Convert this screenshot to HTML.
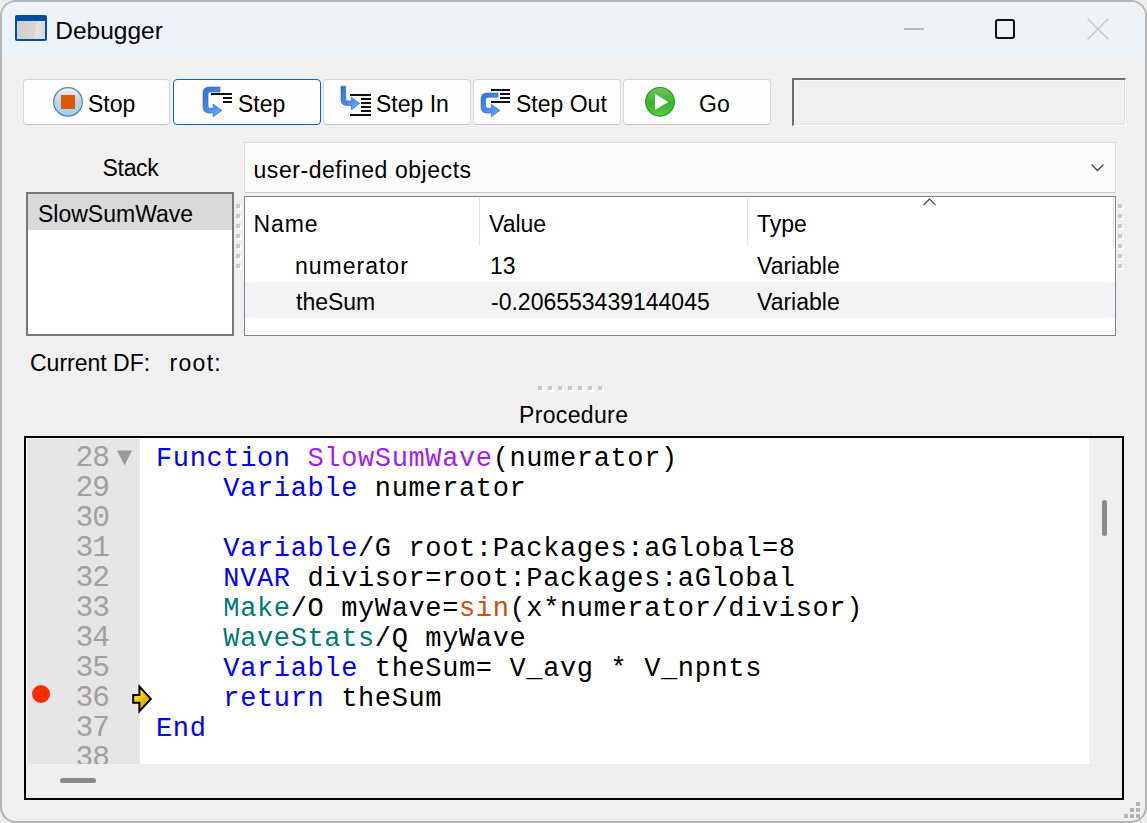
<!DOCTYPE html>
<html><head><meta charset="utf-8">
<style>
html,body{margin:0;padding:0;width:1147px;height:823px;overflow:hidden;background:#eeeeee;position:relative;}
*{box-sizing:border-box;}
.abs{position:absolute;}
.win{position:absolute;left:0;top:0;width:1147px;height:823px;border:2px solid #b5b5b5;border-radius:16px;background:#f0f0f0;overflow:hidden;}
.title{position:absolute;left:0;top:0;width:1143px;height:56px;background:#eef3fa;}
.t{position:absolute;white-space:nowrap;font-family:"Liberation Sans",sans-serif;font-size:23px;line-height:23px;color:#000;}
.m{position:absolute;white-space:nowrap;font-family:"Liberation Mono",monospace;font-size:27px;line-height:27px;letter-spacing:0.63px;color:#000;}
.ln{margin-top:-1px;right:1038px;color:#a0a0a0;font-size:29.5px;letter-spacing:-1px;}
.btn{position:absolute;top:79px;height:46px;background:#fdfdfd;border:1px solid #d5d5d5;border-bottom-color:#c4c4c4;border-radius:4px;}
.dg{position:absolute;width:4px;height:4px;background:#fff;}
.dw{position:absolute;width:4px;height:4px;background:#cacaca;}
</style></head><body>
<div class="win"><div class="title"></div></div>
<!-- title icon -->
<div class="abs" style="left:15px;top:15px;width:32px;height:26px;background:#00509e;border-radius:2px;"></div>
<div class="abs" style="left:17px;top:21px;width:28px;height:18px;background:linear-gradient(100deg,#cfcfcf 0%,#d6d6d6 60%,#e4e4e4 70%,#d2d2d2 100%);"></div>
<div class="t" style="left:55.3px;top:19px;font-size:24.5px;">Debugger</div>
<!-- min/max/close -->
<div class="abs" style="left:904px;top:28px;width:20px;height:2px;background:#b8bbbe;"></div>
<div class="abs" style="left:995px;top:19px;width:20px;height:20px;border:2px solid #111;border-radius:3px;"></div>
<svg class="abs" style="left:1086px;top:17px;" width="24" height="24" viewBox="0 0 24 24"><path d="M2 2L22 22M22 2L2 22" stroke="#c2c6ca" stroke-width="1.4" stroke-linecap="round"/></svg>

<!-- buttons -->
<div class="btn" style="left:23px;width:147px;"></div>
<div class="btn" style="left:173px;width:148px;border-color:#0067c0;"></div>
<div class="btn" style="left:323px;width:148px;"></div>
<div class="btn" style="left:473px;width:148px;"></div>
<div class="btn" style="left:623px;width:148px;"></div>
<div class="abs" style="left:792px;top:78px;width:334px;height:48px;border-style:solid;border-width:2px 1px 1px 2px;border-color:#6d6d6d #fff #fff #6d6d6d;"><div class="abs" style="left:0;top:0;right:0;bottom:0;border:1px solid #f6f6f6;border-right-color:#e3e3e3;border-bottom-color:#e3e3e3;"></div></div>

<svg class="abs" style="left:0;top:0;" width="1147" height="140">
  <defs>
    <linearGradient id="gstop" x1="0" y1="0" x2="0" y2="1"><stop offset="0" stop-color="#eef1f5"/><stop offset="0.5" stop-color="#b9d6ea"/><stop offset="1" stop-color="#93d3ec"/></linearGradient>
    <linearGradient id="ggo" x1="0" y1="0" x2="0" y2="1"><stop offset="0" stop-color="#74c264"/><stop offset="0.55" stop-color="#38b52a"/><stop offset="1" stop-color="#5ccb4c"/></linearGradient>
    <linearGradient id="gblue" x1="0" y1="0" x2="1" y2="1"><stop offset="0" stop-color="#2f6fd0"/><stop offset="1" stop-color="#6aa8f5"/></linearGradient>
  </defs>
  <circle cx="68" cy="101.9" r="14.3" fill="url(#gstop)" stroke="#5a7ea6" stroke-width="1.2"/>
  <rect x="61" y="95" width="14" height="14" fill="#dd5805"/>
  <circle cx="660" cy="101.8" r="14.3" fill="url(#ggo)" stroke="#229a22" stroke-width="1.2"/>
  <path d="M655 93.8L668.3 101.9L655 110Z" fill="#fff"/>
  <!-- step -->
  <path d="M220 87L209 87Q203 87 203 93L203 107Q203 113 209 113L213.2 113L213.2 116.8L222 110.5L213.2 104L213.2 108.3L210 108.3Q208 108.3 208 106.3L208 94Q208 92 210 92L220 92Z" fill="url(#gblue)" stroke="#2763bd" stroke-width="0.6"/>
  <rect x="211" y="93" width="21" height="2" fill="#111"/>
  <rect x="223" y="97" width="9" height="2" fill="#111"/>
  <rect x="223" y="101" width="9" height="2" fill="#111"/>
  <!-- step in -->
  <path d="M341 86.2L345.7 86.2L345.7 99Q345.7 101 347.7 101L351.3 101L351.3 97.2L359.7 103.5L351.3 109.8L351.3 105.4L347 105.4Q341 105.4 341 99.4Z" fill="url(#gblue)" stroke="#2763bd" stroke-width="0.6"/>
  <rect x="350" y="94" width="21" height="2" fill="#111"/>
  <rect x="361" y="98" width="10" height="2" fill="#111"/>
  <rect x="361" y="102" width="10" height="2" fill="#111"/>
  <rect x="361" y="106" width="10" height="2" fill="#111"/>
  <rect x="361" y="110" width="10" height="2" fill="#111"/>
  <rect x="350" y="114" width="21" height="2" fill="#111"/>
  <!-- step out -->
  <path d="M498 93L487 93Q481 93 481 99L481 107Q481 113 487 113L491.3 113L491.3 116.8L499.9 110.5L491.3 104.2L491.3 108.3L488 108.3Q485.6 108.3 485.6 106L485.6 99.5Q485.6 97.2 488 97.2L498 97.2Z" fill="url(#gblue)" stroke="#2763bd" stroke-width="0.6"/>
  <rect x="491" y="89" width="19" height="2" fill="#111"/>
  <rect x="500" y="93" width="10" height="2" fill="#111"/>
  <rect x="500" y="97" width="10" height="2" fill="#111"/>
  <rect x="491" y="101" width="19" height="2" fill="#111"/>
</svg>

<div class="t" style="left:88px;top:93px;">Stop</div>
<div class="t" style="left:238px;top:93px;">Step</div>
<div class="t" style="left:376px;top:93px;">Step In</div>
<div class="t" style="left:516px;top:93px;">Step Out</div>
<div class="t" style="left:699px;top:93px;">Go</div>

<!-- stack -->
<div class="t" style="left:102.5px;top:157px;letter-spacing:-0.3px;">Stack</div>
<div class="abs" style="left:26px;top:192px;width:208px;height:144px;background:#fff;border:2px solid #787878;"></div>
<div class="abs" style="left:28px;top:194px;width:204px;height:36px;background:#d9d9d9;"></div>
<div class="t" style="left:38px;top:203px;">SlowSumWave</div>
<div class="dg" style="left:238px;top:206px;"></div><div class="dw" style="left:236px;top:204px;"></div><div class="dg" style="left:238px;top:216px;"></div><div class="dw" style="left:236px;top:214px;"></div><div class="dg" style="left:238px;top:226px;"></div><div class="dw" style="left:236px;top:224px;"></div><div class="dg" style="left:238px;top:236px;"></div><div class="dw" style="left:236px;top:234px;"></div><div class="dg" style="left:238px;top:246px;"></div><div class="dw" style="left:236px;top:244px;"></div><div class="dg" style="left:238px;top:256px;"></div><div class="dw" style="left:236px;top:254px;"></div><div class="dg" style="left:238px;top:266px;"></div><div class="dw" style="left:236px;top:264px;"></div>

<!-- popup -->
<div class="abs" style="left:244px;top:142px;width:872px;height:51px;background:#fbfbfb;border:1px solid #dadada;border-bottom-color:#c8c8c8;"></div>
<div class="t" style="left:253.5px;top:159px;letter-spacing:0.55px;">user-defined objects</div>
<svg class="abs" style="left:1090px;top:163px;" width="16" height="10"><path d="M1.5 1.5L7.5 7.5L13.5 1.5" stroke="#444" stroke-width="1.3" fill="none"/></svg>

<!-- list -->
<div class="abs" style="left:244px;top:196px;width:872px;height:140px;background:#fff;border:1px solid #7f8590;"></div>
<div class="abs" style="left:479px;top:198px;width:1px;height:48px;background:#e5e5e5;"></div>
<div class="abs" style="left:747px;top:198px;width:1px;height:48px;background:#e5e5e5;"></div>
<div class="abs" style="left:1113px;top:198px;width:1px;height:48px;background:#e5e5e5;"></div>
<svg class="abs" style="left:922px;top:197px;" width="16" height="10"><path d="M1.5 8L7.5 2L13.5 8" stroke="#555" stroke-width="1.3" fill="none"/></svg>
<div class="abs" style="left:245px;top:282px;width:870px;height:36px;background:#f3f3f3;"></div>
<div class="t" style="left:253.5px;top:213px;letter-spacing:0.9px;">Name</div>
<div class="t" style="left:489px;top:213px;">Value</div>
<div class="t" style="left:757px;top:213px;">Type</div>
<div class="t" style="left:295px;top:255px;letter-spacing:1px;">numerator</div>
<div class="t" style="left:490px;top:255px;">13</div>
<div class="t" style="left:757px;top:255px;">Variable</div>
<div class="t" style="left:296px;top:291px;">theSum</div>
<div class="t" style="left:491px;top:291px;">-0.206553439144045</div>
<div class="t" style="left:757px;top:291px;">Variable</div>
<div class="dg" style="left:1120px;top:206px;"></div><div class="dw" style="left:1118px;top:204px;"></div><div class="dg" style="left:1120px;top:216px;"></div><div class="dw" style="left:1118px;top:214px;"></div><div class="dg" style="left:1120px;top:226px;"></div><div class="dw" style="left:1118px;top:224px;"></div><div class="dg" style="left:1120px;top:236px;"></div><div class="dw" style="left:1118px;top:234px;"></div><div class="dg" style="left:1120px;top:246px;"></div><div class="dw" style="left:1118px;top:244px;"></div><div class="dg" style="left:1120px;top:256px;"></div><div class="dw" style="left:1118px;top:254px;"></div><div class="dg" style="left:1120px;top:266px;"></div><div class="dw" style="left:1118px;top:264px;"></div>

<div class="t" style="left:30px;top:352px;">Current DF:</div>
<div class="t" style="left:169.5px;top:352px;letter-spacing:1.3px;">root:</div>
<div class="dg" style="left:540px;top:388px;"></div><div class="dw" style="left:538px;top:386px;"></div><div class="dg" style="left:550px;top:388px;"></div><div class="dw" style="left:548px;top:386px;"></div><div class="dg" style="left:560px;top:388px;"></div><div class="dw" style="left:558px;top:386px;"></div><div class="dg" style="left:570px;top:388px;"></div><div class="dw" style="left:568px;top:386px;"></div><div class="dg" style="left:580px;top:388px;"></div><div class="dw" style="left:578px;top:386px;"></div><div class="dg" style="left:590px;top:388px;"></div><div class="dw" style="left:588px;top:386px;"></div><div class="dg" style="left:600px;top:388px;"></div><div class="dw" style="left:598px;top:386px;"></div>
<div class="t" style="left:519px;top:404px;letter-spacing:0.35px;">Procedure</div>

<!-- code box -->
<div class="abs" style="left:24px;top:436px;width:1100px;height:364px;border:2px solid #000;background:#efefef;"></div>
<div class="abs" style="left:26px;top:438px;width:1063px;height:326px;background:#fff;"></div>
<div class="abs" style="left:27px;top:439px;width:113px;height:325px;background:#e6e6e6;"></div>
<div class="abs" style="left:26px;top:438px;width:1063px;height:326px;overflow:hidden;">
<div class="abs" style="left:-26px;top:-438px;width:1147px;height:823px;">
<div class="m" style="left:156px;top:446px;"><span style="color:#0000ff">Function</span>&#160;<span style="color:#a01ef5">SlowSumWave</span>(numerator)</div>
<div class="m ln" style="top:446px;">28</div>
<div class="m" style="left:156px;top:476px;">&#160;&#160;&#160;&#160;<span style="color:#0000ff">Variable</span>&#160;numerator</div>
<div class="m ln" style="top:476px;">29</div>
<div class="m" style="left:156px;top:506px;"></div>
<div class="m ln" style="top:506px;">30</div>
<div class="m" style="left:156px;top:536px;">&#160;&#160;&#160;&#160;<span style="color:#0000ff">Variable</span>/G&#160;root:Packages:aGlobal=8</div>
<div class="m ln" style="top:536px;">31</div>
<div class="m" style="left:156px;top:566px;">&#160;&#160;&#160;&#160;<span style="color:#0000ff">NVAR</span>&#160;divisor=root:Packages:aGlobal</div>
<div class="m ln" style="top:566px;">32</div>
<div class="m" style="left:156px;top:596px;">&#160;&#160;&#160;&#160;<span style="color:#007a7a">Make</span>/O&#160;myWave=<span style="color:#c8520a">sin</span>(x*numerator/divisor)</div>
<div class="m ln" style="top:596px;">33</div>
<div class="m" style="left:156px;top:626px;">&#160;&#160;&#160;&#160;<span style="color:#007a7a">WaveStats</span>/Q&#160;myWave</div>
<div class="m ln" style="top:626px;">34</div>
<div class="m" style="left:156px;top:656px;">&#160;&#160;&#160;&#160;<span style="color:#0000ff">Variable</span>&#160;theSum=&#160;V_avg&#160;*&#160;V_npnts</div>
<div class="m ln" style="top:656px;">35</div>
<div class="m" style="left:156px;top:686px;">&#160;&#160;&#160;&#160;<span style="color:#0000ff">return</span>&#160;theSum</div>
<div class="m ln" style="top:686px;">36</div>
<div class="m" style="left:156px;top:716px;"><span style="color:#0000ff">End</span></div>
<div class="m ln" style="top:716px;">37</div>
<div class="m ln" style="top:746px;">38</div>
<svg class="abs" style="left:116px;top:449px;" width="18" height="18"><path d="M1 1.5L16 1.5L8.5 16.5Z" fill="#9a9a9a"/></svg>
<div class="abs" style="left:32px;top:685px;width:18px;height:18px;border-radius:50%;background:#ff2a00;"></div>
<svg class="abs" style="left:131px;top:684px;" width="24" height="30"><defs><linearGradient id="gy" x1="0" y1="0" x2="1" y2="1"><stop offset="0" stop-color="#fff530"/><stop offset="0.45" stop-color="#f2cc10"/><stop offset="1" stop-color="#c08a00"/></linearGradient></defs><path d="M2.2 11.1L8.4 11.1L8.4 2.6L19.9 14.9L8.4 27.2L8.4 18.8L2.2 18.8Z" fill="url(#gy)" stroke="#000" stroke-width="2" stroke-linejoin="miter"/></svg>
</div></div>
<div class="abs" style="left:1102px;top:500px;width:5px;height:36px;border-radius:3px;background:#8a8a8a;"></div>
<div class="abs" style="left:60px;top:778px;width:36px;height:5px;border-radius:3px;background:#8a8a8a;"></div>
<!-- grip -->
<div class="abs" style="left:1136px;top:802px;width:4px;height:4px;background:#b4b4b4;"></div>
<div class="abs" style="left:1130px;top:808px;width:4px;height:4px;background:#b4b4b4;"></div>
<div class="abs" style="left:1136px;top:808px;width:4px;height:4px;background:#b4b4b4;"></div>
<div class="abs" style="left:1124px;top:814px;width:4px;height:4px;background:#b4b4b4;"></div>
<div class="abs" style="left:1130px;top:814px;width:4px;height:4px;background:#b4b4b4;"></div>
<div class="abs" style="left:1136px;top:814px;width:4px;height:4px;background:#b4b4b4;"></div>
</body></html>
